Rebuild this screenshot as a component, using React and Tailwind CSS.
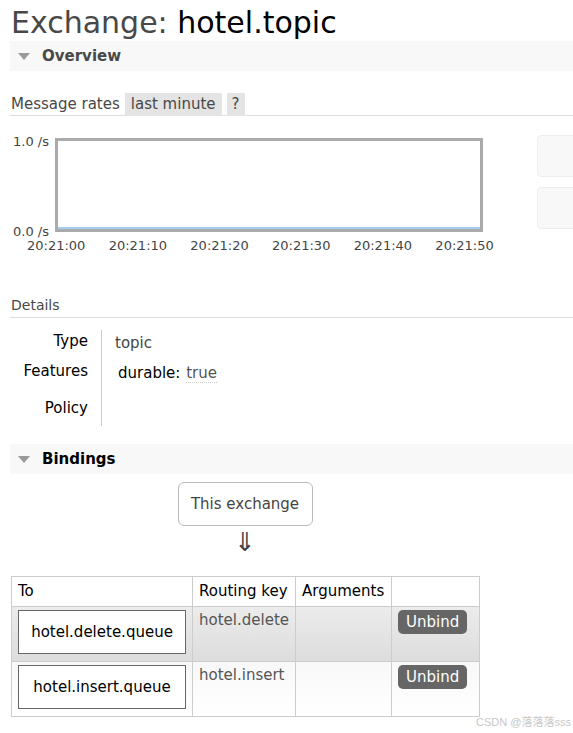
import React from 'react';

const font = { fontFamily: '"DejaVu Sans", Verdana, sans-serif' };

const SectionBar = ({ title, dark }) => (
  <div className="flex items-center h-[30px] bg-[#f8f8f8] ml-[10px] pl-[8px]">
    <span className="w-0 h-0 border-l-[6px] border-r-[6px] border-t-[7px] border-l-transparent border-r-transparent border-t-[#999] mr-[12px]" />
    <span className={`text-[15px] font-bold ${dark ? 'text-black' : 'text-[#484848]'}`}>{title}</span>
  </div>
);

const times = ['20:21:00', '20:21:10', '20:21:20', '20:21:30', '20:21:40', '20:21:50'];

const QueueBox = ({ name }) => (
  <div className="h-[44px] border border-[#666] bg-white flex items-center justify-center text-[15px] text-black">
    {name}
  </div>
);

const UnbindButton = () => (
  <button className="h-[24px] px-[8px] rounded-[5px] bg-[#666] text-white text-[15px] leading-none">Unbind</button>
);

export default function App() {
  return (
    <div className="w-[573px] h-[733px] bg-white text-[#484848] overflow-hidden relative" style={font}>
      <h1 className="text-[30px] leading-[34px] pl-[11px] pt-[6px] text-[#484848]">
        Exchange: <span className="text-black">hotel.topic</span>
      </h1>

      <div className="mt-[1px]">
        <SectionBar title="Overview" />
      </div>

      <div className="ml-[10px] mt-[22px] border-b border-[#ddd] flex items-center h-[23px]">
        <span className="text-[15px] pl-[1px] pr-[5px]">Message rates</span>
        <span className="bg-[#e4e4e4] h-[23px] px-[6px] flex items-center text-[15px]">last minute</span>
        <span className="bg-[#e4e4e4] h-[23px] px-[5px] ml-[5px] flex items-center text-[15px]">?</span>
      </div>

      <div className="flex mt-[19px]">
        <div className="relative w-[500px] h-[130px] shrink-0">
          <div className="flex justify-between h-[103px] w-[44px] text-[13px] leading-[13px] text-[#444] pl-[13px] pt-[0px] flex-col items-start">
            <span>1.0&nbsp;/s</span>
            <span>0.0&nbsp;/s</span>
          </div>
          <div className="absolute left-[55px] top-[3px] w-[428px] h-[94px] border-[3px] border-[#aaa] bg-white flex flex-col justify-end">
            <div className="h-[2px] bg-[#a6cdf0]" />
          </div>
          <div className="absolute left-[27px] top-[101px] w-[490px] flex text-[13px] text-[#444]">
            {times.map((t) => (
              <span key={t} className="w-[85px]">{t}</span>
            ))}
          </div>
        </div>
        <div className="flex flex-col gap-[10px] ml-[37px] pt-[0px]">
          <div className="w-[40px] h-[42px] bg-[#f8f8f8] border border-[#eee] rounded-[4px]" />
          <div className="w-[40px] h-[42px] bg-[#f8f8f8] border border-[#eee] rounded-[4px]" />
        </div>
      </div>

      <div className="ml-[10px] mt-[30px] border-b border-[#ddd] pb-[1px] text-[14px] pl-[1px]">Details</div>

      <div className="flex mt-[12px]">
        <div className="w-[88px] text-right text-[15px] text-black flex flex-col">
          <span className="h-[30px]">Type</span>
          <span className="h-[37px]">Features</span>
          <span className="h-[30px]">Policy</span>
        </div>
        <div className="ml-[13px] border-l border-[#ccc] h-[96px] pl-[13px] text-[15px] flex flex-col">
          <span className="h-[30px] pt-[2px] text-[#444]">topic</span>
          <span className="h-[30px] pt-[2px] pl-[3px] text-black">
            durable: <span className="text-[#555] border-b border-dotted border-[#ccc] ml-[1px]">true</span>
          </span>
        </div>
      </div>

      <div className="mt-[17px]">
        <SectionBar title="Bindings" dark />
      </div>

      <div className="flex flex-col items-center w-[490px] mt-[8px]">
        <div className="w-[135px] h-[44px] border border-[#bbb] rounded-[6px] flex items-center justify-center text-[15px] text-[#444]">
          This exchange
        </div>
        <div className="text-[26px] leading-[30px] text-[#444] mt-[1px]">⇓</div>
      </div>

      <table className="ml-[11px] mt-[19px] border-collapse text-[15px]">
        <thead>
          <tr className="h-[30px] text-black">
            <th className="w-[181px] border border-[#ccc] text-left font-normal px-[6px]">To</th>
            <th className="w-[103px] border border-[#ccc] text-left font-normal px-[6px]">Routing key</th>
            <th className="w-[96px] border border-[#ccc] text-left font-normal px-[6px]">Arguments</th>
            <th className="w-[88px] border border-[#ccc]" />
          </tr>
        </thead>
        <tbody>
          <tr className="h-[55px] bg-gradient-to-b from-[#ececec] to-[#dcdcdc]">
            <td className="border border-[#ccc] px-[6px] align-top pt-[3px]"><QueueBox name="hotel.delete.queue" /></td>
            <td className="border border-[#ccc] px-[6px] align-top pt-[2px] text-[#555]">hotel.delete</td>
            <td className="border border-[#ccc]" />
            <td className="border border-[#ccc] px-[6px] align-top pt-[3px]"><UnbindButton /></td>
          </tr>
          <tr className="h-[55px] bg-gradient-to-b from-[#f8f8f8] to-white">
            <td className="border border-[#ccc] px-[6px] align-top pt-[3px]"><QueueBox name="hotel.insert.queue" /></td>
            <td className="border border-[#ccc] px-[6px] align-top pt-[2px] text-[#555]">hotel.insert</td>
            <td className="border border-[#ccc]" />
            <td className="border border-[#ccc] px-[6px] align-top pt-[3px]"><UnbindButton /></td>
          </tr>
        </tbody>
      </table>

      <div
        className="absolute right-[2px] bottom-[3px] text-[11px] text-[#c8c8c8]"
        style={{ fontFamily: '"Liberation Sans", "Noto Sans CJK SC", sans-serif' }}
      >
        CSDN @落落落sss
      </div>
    </div>
  );
}
